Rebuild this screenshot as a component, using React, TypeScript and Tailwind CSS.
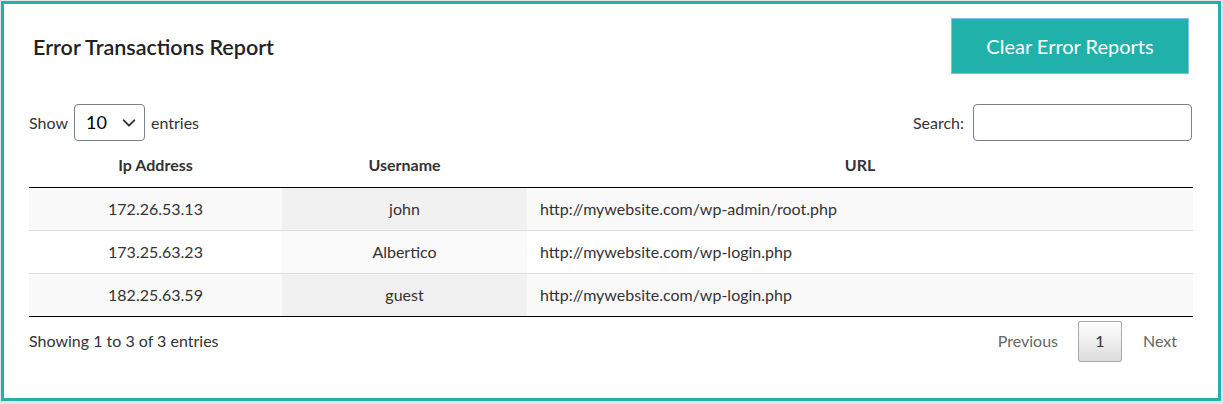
const rows = [
  { ip: "172.26.53.13", user: "john", url: "http://mywebsite.com/wp-admin/root.php" },
  { ip: "173.25.63.23", user: "Albertico", url: "http://mywebsite.com/wp-login.php" },
  { ip: "182.25.63.59", user: "guest", url: "http://mywebsite.com/wp-login.php" },
];

export default function App() {
  return (
    <div className="w-[1223px] h-[404px] bg-[#e4e4e4] pt-px pl-px font-['Lato',sans-serif] text-[#333]">
      <div className="w-[1220px] h-[400px] bg-white border-[3px] border-[#20b2aa] px-[25px]">
        {/* header */}
        <div className="flex items-start justify-between pt-[14px]">
          <h2 className="pl-[4px] pt-[19px] text-[21.5px] font-semibold text-[#222] leading-none">
            Error Transactions Report
          </h2>
          <button className="mr-[4px] w-[238px] h-[56px] bg-[#20b2aa] border border-[#8fb8f0] text-white text-[20px]">
            Clear Error Reports
          </button>
        </div>

        {/* controls */}
        <div className="flex items-center justify-between mt-[30px] text-[16px]">
          <label className="flex items-center gap-[6px]">
            Show
            <span className="flex items-center justify-between w-[71px] h-[37px] border border-[#7b828a] rounded-[4px] pl-[11px] pr-[8px] text-[18px] text-black">
              10
              <svg width="14" height="14" viewBox="0 0 16 16" fill="none" stroke="#333" strokeWidth="2.2" strokeLinecap="round" strokeLinejoin="round">
                <path d="M2 5l6 6 6-6" />
              </svg>
            </span>
            entries
          </label>
          <label className="flex items-center gap-[9px]">
            Search:
            <span className="block w-[219px] h-[37px] mr-[1px] border border-[#7b828a] rounded-[4px]" />
          </label>
        </div>

        {/* table */}
        <table className="w-full mt-[2px] text-[16px] border-collapse">
          <thead>
            <tr className="h-[44px] border-b border-black">
              <th className="w-[253px] font-bold text-center">Ip Address</th>
              <th className="w-[245px] font-bold text-center">Username</th>
              <th className="font-bold text-center">URL</th>
            </tr>
          </thead>
          <tbody>
            {rows.map((r, i) => (
              <tr
                key={r.ip}
                className={`h-[43px] ${i % 2 === 0 ? "bg-[#f9f9f9]" : "bg-white"} ${i < rows.length - 1 ? "border-b border-[#ddd]" : "border-b border-black"}`}
              >
                <td className="text-center">{r.ip}</td>
                <td className={`text-center ${i % 2 === 0 ? "bg-[#f1f1f1]" : "bg-[#fafafa]"}`}>{r.user}</td>
                <td className="pl-[13px]">{r.url}</td>
              </tr>
            ))}
          </tbody>
        </table>

        {/* footer */}
        <div className="flex items-center justify-between pt-[4px] text-[16px]">
          <span>Showing 1 to 3 of 3 entries</span>
          <div className="flex items-center">
            <span className="px-[20px] text-[#666]">Previous</span>
            <span className="flex items-center justify-center w-[44px] h-[41px] border border-[#aaa] rounded-[2px] bg-gradient-to-b from-white to-[#dcdcdc] text-[#333]">
              1
            </span>
            <span className="pl-[21px] pr-[16px] text-[#666]">Next</span>
          </div>
        </div>
      </div>
    </div>
  );
}
